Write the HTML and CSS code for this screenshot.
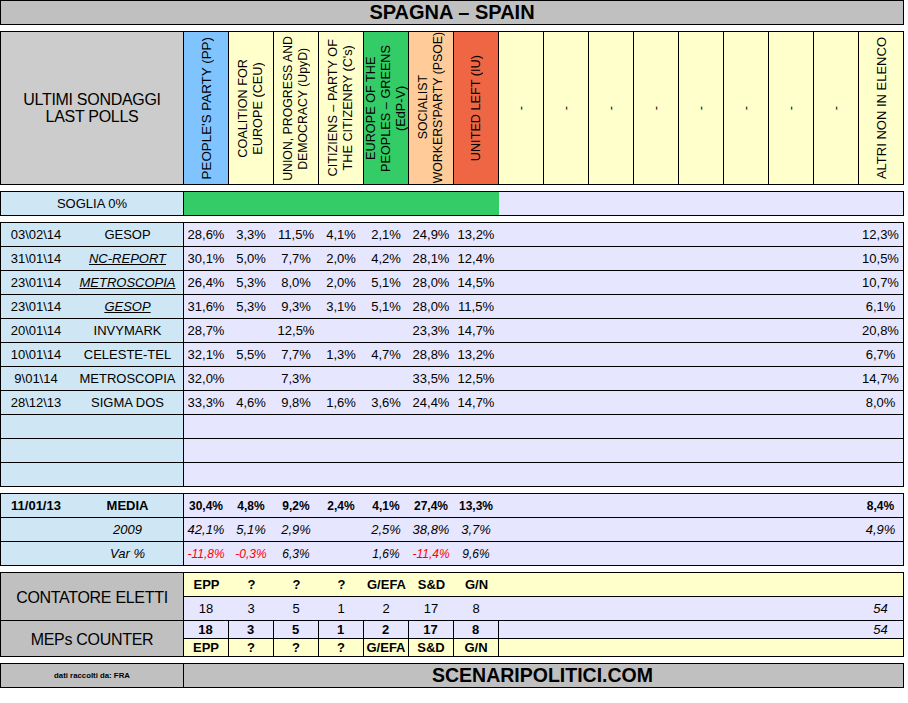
FILE: index.html
```html
<!DOCTYPE html>
<html lang="it">
<head>
<meta charset="utf-8">
<title>Spagna – Spain</title>
<link rel="stylesheet" href="styles.css">
</head>
<body>
<main class="sheet">
  <h1 class="box title">SPAGNA – SPAIN</h1>

  <section class="box grid head">
    <div class="c grey big v">ULTIMI SONDAGGI<br>LAST POLLS</div>
    <div class="c party v pp wide"><span>PEOPLE'S PARTY (PP)</span></div>
    <div class="c party v yel"><span>COALITION FOR<br>EUROPE (CEU)</span></div>
    <div class="c party v yel narrow"><span>UNION, PROGRESS AND<br>DEMOCRACY (UpyD)</span></div>
    <div class="c party v yel"><span>CITIZIENS – PARTY OF<br>THE CITIZENRY (C's)</span></div>
    <div class="c party v grn"><span>EUROPE OF THE<br>PEOPLES – GREENS<br>(EdP-V)</span></div>
    <div class="c party v org narrow"><span>SOCIALIST<br>WORKERS'PARTY (PSOE)</span></div>
    <div class="c party v red"><span>UNITED LEFT (IU)</span></div>
    <div class="c party v yel"><span>-</span></div>
    <div class="c party v yel"><span>-</span></div>
    <div class="c party v yel"><span>-</span></div>
    <div class="c party v yel"><span>-</span></div>
    <div class="c party v yel"><span>-</span></div>
    <div class="c party v yel"><span>-</span></div>
    <div class="c party v yel"><span>-</span></div>
    <div class="c party v yel"><span>-</span></div>
    <div class="c party yel altri"><span>ALTRI NON IN ELENCO</span></div>
  </section>

  <section class="box grid soglia">
    <div class="c sky v mid">SOGLIA 0%</div>
    <div class="c s7 grnbar"></div>
    <div class="c s9 lav"></div>
  </section>

  <section class="box grid polls">
    <div class="c sky v lab"><span class="date">03\02\14</span><span class="src">GESOP</span></div>
    <div class="c lav">28,6%</div><div class="c lav">3,3%</div><div class="c lav">11,5%</div><div class="c lav">4,1%</div><div class="c lav">2,1%</div><div class="c lav">24,9%</div><div class="c lav">13,2%</div><div class="c s8 lav"></div><div class="c lav">12,3%</div>

    <div class="c sky v lab"><span class="date">31\01\14</span><span class="src link">NC-REPORT</span></div>
    <div class="c lav">30,1%</div><div class="c lav">5,0%</div><div class="c lav">7,7%</div><div class="c lav">2,0%</div><div class="c lav">4,2%</div><div class="c lav">28,1%</div><div class="c lav">12,4%</div><div class="c s8 lav"></div><div class="c lav">10,5%</div>

    <div class="c sky v lab"><span class="date">23\01\14</span><span class="src link">METROSCOPIA</span></div>
    <div class="c lav">26,4%</div><div class="c lav">5,3%</div><div class="c lav">8,0%</div><div class="c lav">2,0%</div><div class="c lav">5,1%</div><div class="c lav">28,0%</div><div class="c lav">14,5%</div><div class="c s8 lav"></div><div class="c lav">10,7%</div>

    <div class="c sky v lab"><span class="date">23\01\14</span><span class="src link">GESOP</span></div>
    <div class="c lav">31,6%</div><div class="c lav">5,3%</div><div class="c lav">9,3%</div><div class="c lav">3,1%</div><div class="c lav">5,1%</div><div class="c lav">28,0%</div><div class="c lav">11,5%</div><div class="c s8 lav"></div><div class="c lav">6,1%</div>

    <div class="c sky v lab"><span class="date">20\01\14</span><span class="src">INVYMARK</span></div>
    <div class="c lav">28,7%</div><div class="c lav"></div><div class="c lav">12,5%</div><div class="c lav"></div><div class="c lav"></div><div class="c lav">23,3%</div><div class="c lav">14,7%</div><div class="c s8 lav"></div><div class="c lav">20,8%</div>

    <div class="c sky v lab"><span class="date">10\01\14</span><span class="src">CELESTE-TEL</span></div>
    <div class="c lav">32,1%</div><div class="c lav">5,5%</div><div class="c lav">7,7%</div><div class="c lav">1,3%</div><div class="c lav">4,7%</div><div class="c lav">28,8%</div><div class="c lav">13,2%</div><div class="c s8 lav"></div><div class="c lav">6,7%</div>

    <div class="c sky v lab"><span class="date">9\01\14</span><span class="src">METROSCOPIA</span></div>
    <div class="c lav">32,0%</div><div class="c lav"></div><div class="c lav">7,3%</div><div class="c lav"></div><div class="c lav"></div><div class="c lav">33,5%</div><div class="c lav">12,5%</div><div class="c s8 lav"></div><div class="c lav">14,7%</div>

    <div class="c sky v lab"><span class="date">28\12\13</span><span class="src">SIGMA DOS</span></div>
    <div class="c lav">33,3%</div><div class="c lav">4,6%</div><div class="c lav">9,8%</div><div class="c lav">1,6%</div><div class="c lav">3,6%</div><div class="c lav">24,4%</div><div class="c lav">14,7%</div><div class="c s8 lav"></div><div class="c lav">8,0%</div>

    <div class="c sky v"></div><div class="c s16 lav"></div>
    <div class="c sky v"></div><div class="c s16 lav"></div>
    <div class="c sky v"></div><div class="c s16 lav"></div>
  </section>

  <section class="box grid polls">
    <div class="c sky v lab bold"><span class="date">11/01/13</span><span class="src">MEDIA</span></div>
    <div class="c lav bold tight">30,4%</div><div class="c lav bold tight">4,8%</div><div class="c lav bold tight">9,2%</div><div class="c lav bold tight">2,4%</div><div class="c lav bold tight">4,1%</div><div class="c lav bold tight">27,4%</div><div class="c lav bold tight">13,3%</div><div class="c s8 lav"></div><div class="c lav bold tight">8,4%</div>

    <div class="c sky v lab it"><span class="date"></span><span class="src">2009</span></div>
    <div class="c lav it">42,1%</div><div class="c lav it">5,1%</div><div class="c lav it">2,9%</div><div class="c lav"></div><div class="c lav it">2,5%</div><div class="c lav it">38,8%</div><div class="c lav it">3,7%</div><div class="c s8 lav"></div><div class="c lav it">4,9%</div>

    <div class="c sky v lab it"><span class="date"></span><span class="src">Var %</span></div>
    <div class="c lav it neg tight">-11,8%</div><div class="c lav it neg tight">-0,3%</div><div class="c lav it tight">6,3%</div><div class="c lav"></div><div class="c lav it tight">1,6%</div><div class="c lav it neg tight">-11,4%</div><div class="c lav it tight">9,6%</div><div class="c s8 lav"></div><div class="c lav"></div>
  </section>

  <section class="box grid counter">
    <div class="c dark v big r2">CONTATORE ELETTI</div>
    <div class="c yel bold">EPP</div><div class="c yel bold">?</div><div class="c yel bold">?</div><div class="c yel bold">?</div><div class="c yel bold">G/EFA</div><div class="c yel bold">S&amp;D</div><div class="c yel bold">G/N</div><div class="c s9 yel"></div>
    <div class="c lav">18</div><div class="c lav">3</div><div class="c lav">5</div><div class="c lav">1</div><div class="c lav">2</div><div class="c lav">17</div><div class="c lav">8</div><div class="c s8 lav"></div><div class="c lav it">54</div>
  </section>
  <section class="grid meps">
    <div class="c dark v big r2">MEPs COUNTER</div>
    <div class="c lav bold v">18</div><div class="c lav bold v">3</div><div class="c lav bold v">5</div><div class="c lav bold v">1</div><div class="c lav bold v">2</div><div class="c lav bold v">17</div><div class="c lav bold v">8</div><div class="c s8 lav"></div><div class="c lav it">54</div>
    <div class="c yel bold v">EPP</div><div class="c yel bold v">?</div><div class="c yel bold v">?</div><div class="c yel bold v">?</div><div class="c yel bold v">G/EFA</div><div class="c yel bold v">S&amp;D</div><div class="c yel bold v">G/N</div><div class="c s9 yel"></div>
  </section>

  <footer class="box grid foot">
    <div class="c dark v credit">dati raccolti da: FRA</div>
    <div class="c dark s16 brand">SCENARIPOLITICI.COM</div>
  </footer>
</main>
</body>
</html>
```

FILE: styles.css
```css
* { box-sizing: border-box; }
html, body { margin: 0; background: #fff; }
body { font-family: "Liberation Sans", Arial, sans-serif; font-size: 13px; color: #000; }
.sheet { width: 904px; display: flex; flex-direction: column; }

.box { border: 1px solid #000; border-bottom: 0; margin-top: 6px; }
.title {
  margin: 0; height: 25px; background: #c0c0c0; border-bottom: 1px solid #000;
  font-size: 20px; font-weight: 700; line-height: 22px; text-align: center;
}
.grid {
  display: grid;
  grid-template-columns: 183px repeat(15, 45px) 44px;
  grid-auto-rows: 24px;
  width: 904px;
}
.c {
  display: flex; align-items: center; justify-content: center; text-align: center;
  border-bottom: 1px solid #000; white-space: nowrap; min-width: 0;
}
.v { border-right: 1px solid #000; }

.head { grid-template-rows: 153px; margin-top: 6px; }
.party { font-size: 12.7px; }
.party.wide { font-size: 13.4px; }
.party.narrow { font-size: 12.3px; }
.party.altri { font-size: 13px; }
.party span { writing-mode: vertical-rl; transform: rotate(180deg); line-height: 15px; }
.grey { background: #cccccc; }
.dark { background: #c0c0c0; }
.big { font-size: 16px; letter-spacing: -0.3px; line-height: 17px; }
.pp { background: #80c4ff; }
.yel { background: #ffffcc; }
.grn { background: #33cc66; }
.org { background: #ffcc99; }
.red { background: #ee6644; }
.sky { background: #cfe6f4; }
.lav { background: #e6e6ff; padding-right: 1px; }
.grnbar { background: #33cc66; }

.s7 { grid-column: span 7; }
.s8 { grid-column: span 8; }
.s9 { grid-column: span 9; }
.s16 { grid-column: span 16; }
.r2 { grid-row: span 2; }

.lab { display: grid; grid-template-columns: 71px 112px; justify-items: center; }
.link { font-style: italic; text-decoration: underline; }
.bold { font-weight: 700; }
.it { font-style: italic; }
.tight { font-size: 12px; }
.neg { color: #ff0000; }

.meps { border-left: 1px solid #000; border-right: 1px solid #000; grid-template-rows: 18px 18px; grid-auto-rows: 18px; }
.meps .big { padding-top: 1px; }
.counter .big { padding-top: 1px; }
.credit { font-size: 7.8px; font-weight: 700; }
.brand { font-size: 19.5px; font-weight: 700; padding-right: 2px; }
```
